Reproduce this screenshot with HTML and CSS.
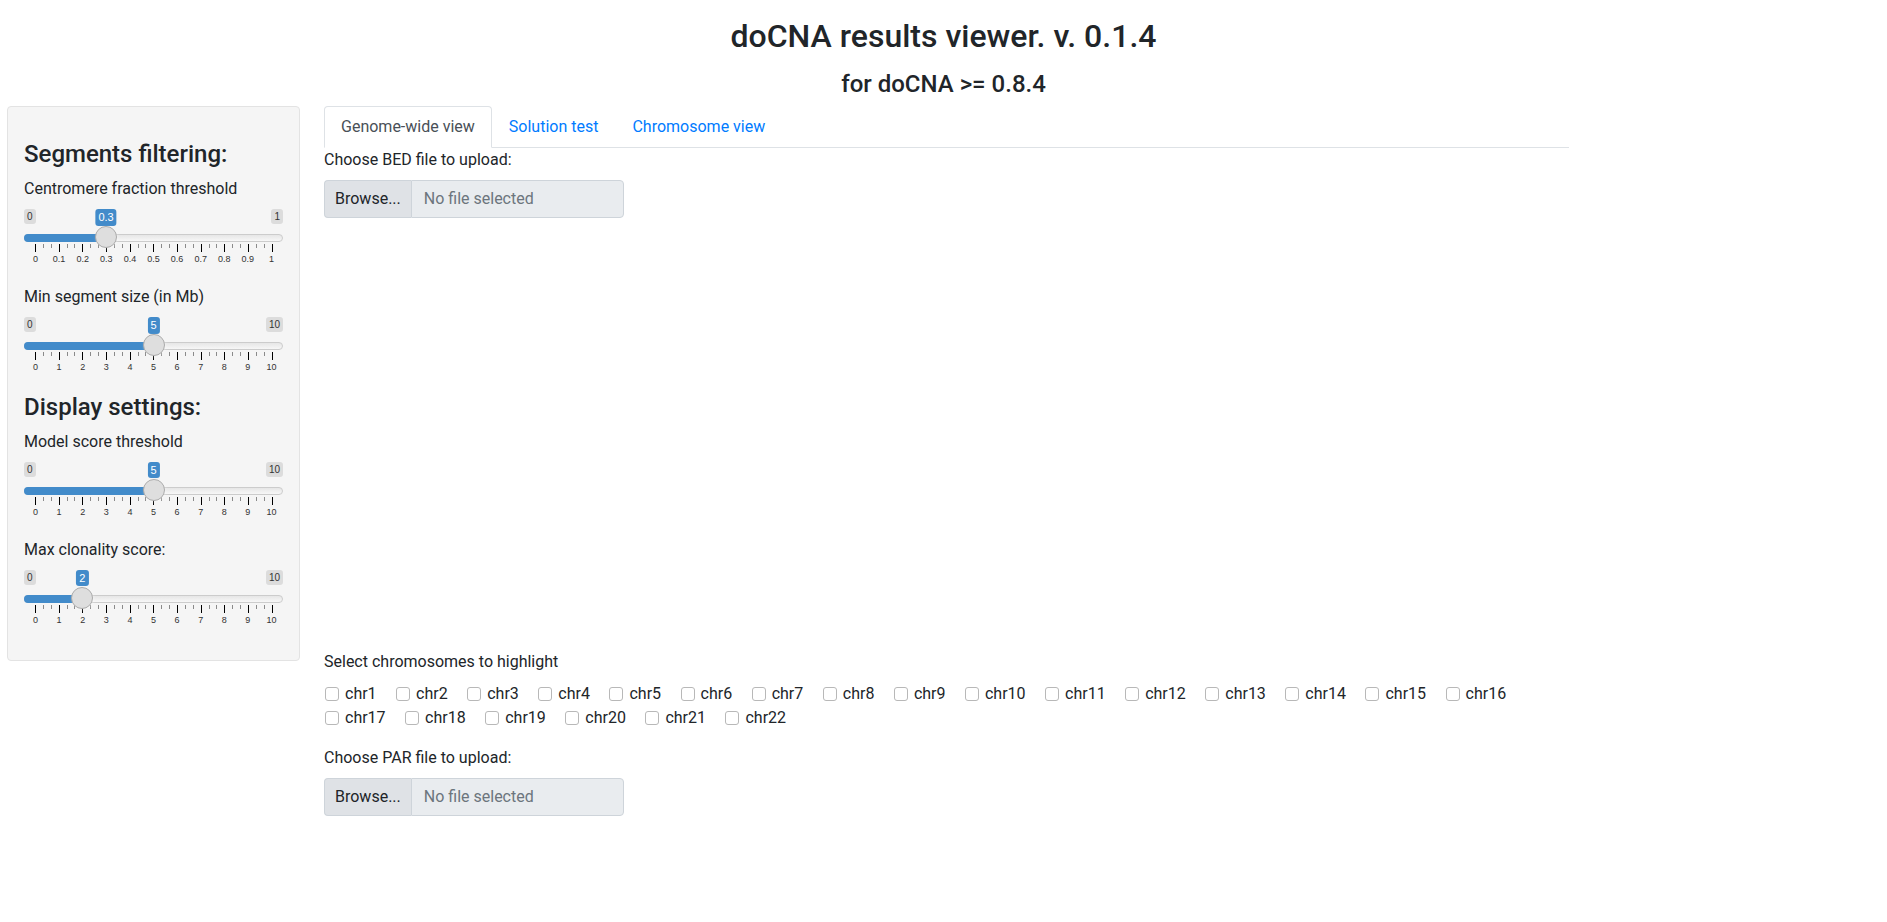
FILE: index.html
```html
<!DOCTYPE html>
<html lang="en">
<head>
<meta charset="utf-8">
<title>doCNA results viewer</title>
<link rel="stylesheet" href="styles.css">
</head>
<body>
<header class="page-header">
  <h2 class="title">doCNA results viewer. v. 0.1.4</h2>
  <h4 class="subtitle">for doCNA &gt;= 0.8.4</h4>
</header>

<div class="layout">
  <aside class="well">
    <h4 class="section first">Segments filtering:</h4>

    <div class="form-group">
      <label class="control-label">Centromere fraction threshold</label>
      <div class="irs" style="--p:0.3">
        <div class="irs-top"><span class="irs-min">0</span><span class="irs-max">1</span></div>
        <div class="irs-line"><div class="irs-bar"></div></div>
        <div class="irs-grid">
          <div class="grid-ticks"><i class="b"></i><i></i><i></i><i class="b"></i><i></i><i></i><i class="b"></i><i></i><i></i><i class="b"></i><i></i><i></i><i class="b"></i><i></i><i></i><i class="b"></i><i></i><i></i><i class="b"></i><i></i><i></i><i class="b"></i><i></i><i></i><i class="b"></i><i></i><i></i><i class="b"></i><i></i><i></i><i class="b"></i></div>
          <div class="grid-text"><span>0</span><span>0.1</span><span>0.2</span><span>0.3</span><span>0.4</span><span>0.5</span><span>0.6</span><span>0.7</span><span>0.8</span><span>0.9</span><span>1</span></div>
        </div>
        <span class="irs-single">0.3</span>
        <span class="irs-handle"></span>
      </div>
    </div>

    <div class="form-group">
      <label class="control-label">Min segment size (in Mb)</label>
      <div class="irs" style="--p:0.5">
        <div class="irs-top"><span class="irs-min">0</span><span class="irs-max">10</span></div>
        <div class="irs-line"><div class="irs-bar"></div></div>
        <div class="irs-grid">
          <div class="grid-ticks"><i class="b"></i><i></i><i></i><i class="b"></i><i></i><i></i><i class="b"></i><i></i><i></i><i class="b"></i><i></i><i></i><i class="b"></i><i></i><i></i><i class="b"></i><i></i><i></i><i class="b"></i><i></i><i></i><i class="b"></i><i></i><i></i><i class="b"></i><i></i><i></i><i class="b"></i><i></i><i></i><i class="b"></i></div>
          <div class="grid-text"><span>0</span><span>1</span><span>2</span><span>3</span><span>4</span><span>5</span><span>6</span><span>7</span><span>8</span><span>9</span><span>10</span></div>
        </div>
        <span class="irs-single">5</span>
        <span class="irs-handle"></span>
      </div>
    </div>

    <h4 class="section">Display settings:</h4>

    <div class="form-group">
      <label class="control-label">Model score threshold</label>
      <div class="irs" style="--p:0.5">
        <div class="irs-top"><span class="irs-min">0</span><span class="irs-max">10</span></div>
        <div class="irs-line"><div class="irs-bar"></div></div>
        <div class="irs-grid">
          <div class="grid-ticks"><i class="b"></i><i></i><i></i><i class="b"></i><i></i><i></i><i class="b"></i><i></i><i></i><i class="b"></i><i></i><i></i><i class="b"></i><i></i><i></i><i class="b"></i><i></i><i></i><i class="b"></i><i></i><i></i><i class="b"></i><i></i><i></i><i class="b"></i><i></i><i></i><i class="b"></i><i></i><i></i><i class="b"></i></div>
          <div class="grid-text"><span>0</span><span>1</span><span>2</span><span>3</span><span>4</span><span>5</span><span>6</span><span>7</span><span>8</span><span>9</span><span>10</span></div>
        </div>
        <span class="irs-single">5</span>
        <span class="irs-handle"></span>
      </div>
    </div>

    <div class="form-group last">
      <label class="control-label">Max clonality score:</label>
      <div class="irs" style="--p:0.2">
        <div class="irs-top"><span class="irs-min">0</span><span class="irs-max">10</span></div>
        <div class="irs-line"><div class="irs-bar"></div></div>
        <div class="irs-grid">
          <div class="grid-ticks"><i class="b"></i><i></i><i></i><i class="b"></i><i></i><i></i><i class="b"></i><i></i><i></i><i class="b"></i><i></i><i></i><i class="b"></i><i></i><i></i><i class="b"></i><i></i><i></i><i class="b"></i><i></i><i></i><i class="b"></i><i></i><i></i><i class="b"></i><i></i><i></i><i class="b"></i><i></i><i></i><i class="b"></i></div>
          <div class="grid-text"><span>0</span><span>1</span><span>2</span><span>3</span><span>4</span><span>5</span><span>6</span><span>7</span><span>8</span><span>9</span><span>10</span></div>
        </div>
        <span class="irs-single">2</span>
        <span class="irs-handle"></span>
      </div>
    </div>
  </aside>

  <main class="main">
    <ul class="nav-tabs">
      <li><a class="nav-link active">Genome-wide view</a></li>
      <li><a class="nav-link">Solution test</a></li>
      <li><a class="nav-link">Chromosome view</a></li>
    </ul>

    <div class="tab-content">
      <div class="form-group file-group">
        <label class="control-label">Choose BED file to upload:</label>
        <div class="input-group">
          <span class="btn-browse">Browse...</span>
          <span class="file-name">No file selected</span>
        </div>
        <div class="progress-space"></div>
      </div>

      <div class="plot-area"></div>

      <div class="form-group">
        <label class="control-label">Select chromosomes to highlight</label>
        <div class="checks">
          <label class="check"><input type="checkbox"><span>chr1</span></label>
          <label class="check"><input type="checkbox"><span>chr2</span></label>
          <label class="check"><input type="checkbox"><span>chr3</span></label>
          <label class="check"><input type="checkbox"><span>chr4</span></label>
          <label class="check"><input type="checkbox"><span>chr5</span></label>
          <label class="check"><input type="checkbox"><span>chr6</span></label>
          <label class="check"><input type="checkbox"><span>chr7</span></label>
          <label class="check"><input type="checkbox"><span>chr8</span></label>
          <label class="check"><input type="checkbox"><span>chr9</span></label>
          <label class="check"><input type="checkbox"><span>chr10</span></label>
          <label class="check"><input type="checkbox"><span>chr11</span></label>
          <label class="check"><input type="checkbox"><span>chr12</span></label>
          <label class="check"><input type="checkbox"><span>chr13</span></label>
          <label class="check"><input type="checkbox"><span>chr14</span></label>
          <label class="check"><input type="checkbox"><span>chr15</span></label>
          <label class="check"><input type="checkbox"><span>chr16</span></label>
          <label class="check"><input type="checkbox"><span>chr17</span></label>
          <label class="check"><input type="checkbox"><span>chr18</span></label>
          <label class="check"><input type="checkbox"><span>chr19</span></label>
          <label class="check"><input type="checkbox"><span>chr20</span></label>
          <label class="check"><input type="checkbox"><span>chr21</span></label>
          <label class="check"><input type="checkbox"><span>chr22</span></label>
        </div>
      </div>

      <div class="form-group file-group">
        <label class="control-label">Choose PAR file to upload:</label>
        <div class="input-group">
          <span class="btn-browse">Browse...</span>
          <span class="file-name">No file selected</span>
        </div>
      </div>
    </div>
  </main>
</div>
</body>
</html>
```
FILE: styles.css
```css
* { box-sizing: border-box; }

body {
  margin: 0;
  font-family: Roboto, "Liberation Sans", Arial, sans-serif;
  font-size: 16px;
  line-height: 1.5;
  color: #212529;
  background: #fff;
}

/* header */
.page-header {
  text-align: center;
  padding-top: 17px;
}
.title {
  margin: 0;
  font-size: 32px;
  font-weight: 500;
  line-height: 1.2;
}
.subtitle {
  margin: 15px 0 0;
  font-size: 24px;
  font-weight: 500;
  line-height: 1.2;
}

/* layout */
.layout {
  display: flex;
  align-items: flex-start;
  margin-top: 7px;
  padding-left: 7px;
}

.well {
  width: 293px;
  flex: none;
  background: #f5f5f5;
  border: 1px solid #e3e3e3;
  border-radius: 4px;
  padding: 16px 16px 14px;
}

.section {
  margin: 0 0 8px;
  font-size: 24px;
  font-weight: 500;
  line-height: 1.2;
}
.section.first { margin-top: 17px; }

.form-group { margin-bottom: 16px; }
.control-label {
  display: inline-block;
  margin-bottom: 8px;
  font-weight: 400;
}

/* ion range slider (shiny skin) */
.irs {
  position: relative;
  height: 60px;
  font-family: "Liberation Sans", Arial, sans-serif;
}
.irs-top {
  display: flex;
  justify-content: space-between;
  height: 17px;
  margin-bottom: 8px;
}
.irs-min, .irs-max {
  font-size: 10px;
  line-height: 1.333;
  padding: 1px 3px;
  height: 15.33px;
  background: rgba(0, 0, 0, 0.1);
  border-radius: 3px;
  color: #333;
}
.irs-line {
  height: 8px;
  border: 1px solid #cccccc;
  border-radius: 8px;
  background: linear-gradient(to bottom, #dedede -50%, #ffffff 150%);
}
.irs-bar {
  height: 8px;
  margin: -1px 0 0 -1px;
  width: calc(11px + var(--p) * (100% - 22px));
  background: #428bca;
  border-radius: 8px 0 0 8px;
}
.irs-grid {
  margin-top: 2px;
  padding: 0 10px 0 11px;
}
.grid-ticks {
  display: flex;
  justify-content: space-between;
  align-items: flex-start;
  height: 8px;
}
.grid-ticks i {
  display: block;
  width: 1px;
  height: 4px;
  background: #8a8a8a;
}
.grid-ticks i.b {
  height: 8px;
  background: #000;
}
.grid-text {
  display: flex;
  justify-content: space-between;
  margin-top: 3px;
  height: 9px;
  padding-right: 1px;
  font-size: 9px;
  line-height: 9px;
  color: #333;
}
.grid-text span {
  width: 1px;
  display: flex;
  justify-content: center;
  white-space: nowrap;
}
.irs-single {
  position: absolute;
  top: 0;
  left: calc(11px + var(--p) * (100% - 22px));
  transform: translateX(-50%);
  font-size: 11px;
  line-height: 1.333;
  padding: 1px 3px;
  background: #428bca;
  color: #fff;
  border-radius: 3px;
  white-space: nowrap;
}
.irs-handle {
  position: absolute;
  top: 17px;
  left: calc(var(--p) * (100% - 22px));
  width: 22px;
  height: 22px;
  border: 1px solid #ababab;
  background: #dedede;
  border-radius: 50%;
  box-shadow: 1px 1px 3px rgba(255, 255, 255, 0.3);
}

/* main panel */
.main {
  width: 1245px;
  margin-left: 24px;
  flex: none;
}
.nav-tabs {
  display: flex;
  list-style: none;
  margin: 0;
  padding: 0;
  border-bottom: 1px solid #dee2e6;
}
.nav-tabs li { margin-bottom: -1px; }
.nav-link {
  display: block;
  padding: 8px 16px;
  border: 1px solid transparent;
  border-top-left-radius: 4px;
  border-top-right-radius: 4px;
  color: #007bff;
  text-decoration: none;
  cursor: pointer;
}
.nav-link.active {
  color: #495057;
  background: #fff;
  border-color: #dee2e6 #dee2e6 #fff;
}

.input-group {
  display: flex;
  width: 300px;
  height: 38px;
}
.btn-browse {
  padding: 6px 10px;
  border: 1px solid #ced4da;
  border-right: 0;
  border-radius: 4px 0 0 4px;
  background: #dfe2e6;
  color: #212529;
  white-space: nowrap;
}
.file-name {
  flex: 1;
  padding: 6px 12px;
  border: 1px solid #ced4da;
  border-radius: 0 4px 4px 0;
  background: #e9ecef;
  color: #6c757d;
}
.progress-space { height: 16px; }
.file-group { margin-bottom: 16px; }

.plot-area { height: 400px; }

.checks {
  display: flex;
  flex-wrap: wrap;
}
.check {
  display: flex;
  align-items: center;
  margin-right: 18.5px;
  line-height: 24px;
}
.check input {
  appearance: none;
  -webkit-appearance: none;
  width: 14px;
  height: 14px;
  margin: 0 6px 0 1px;
  border: 1px solid #b8b8b8;
  border-radius: 3px;
  background: #fff;
}
```
